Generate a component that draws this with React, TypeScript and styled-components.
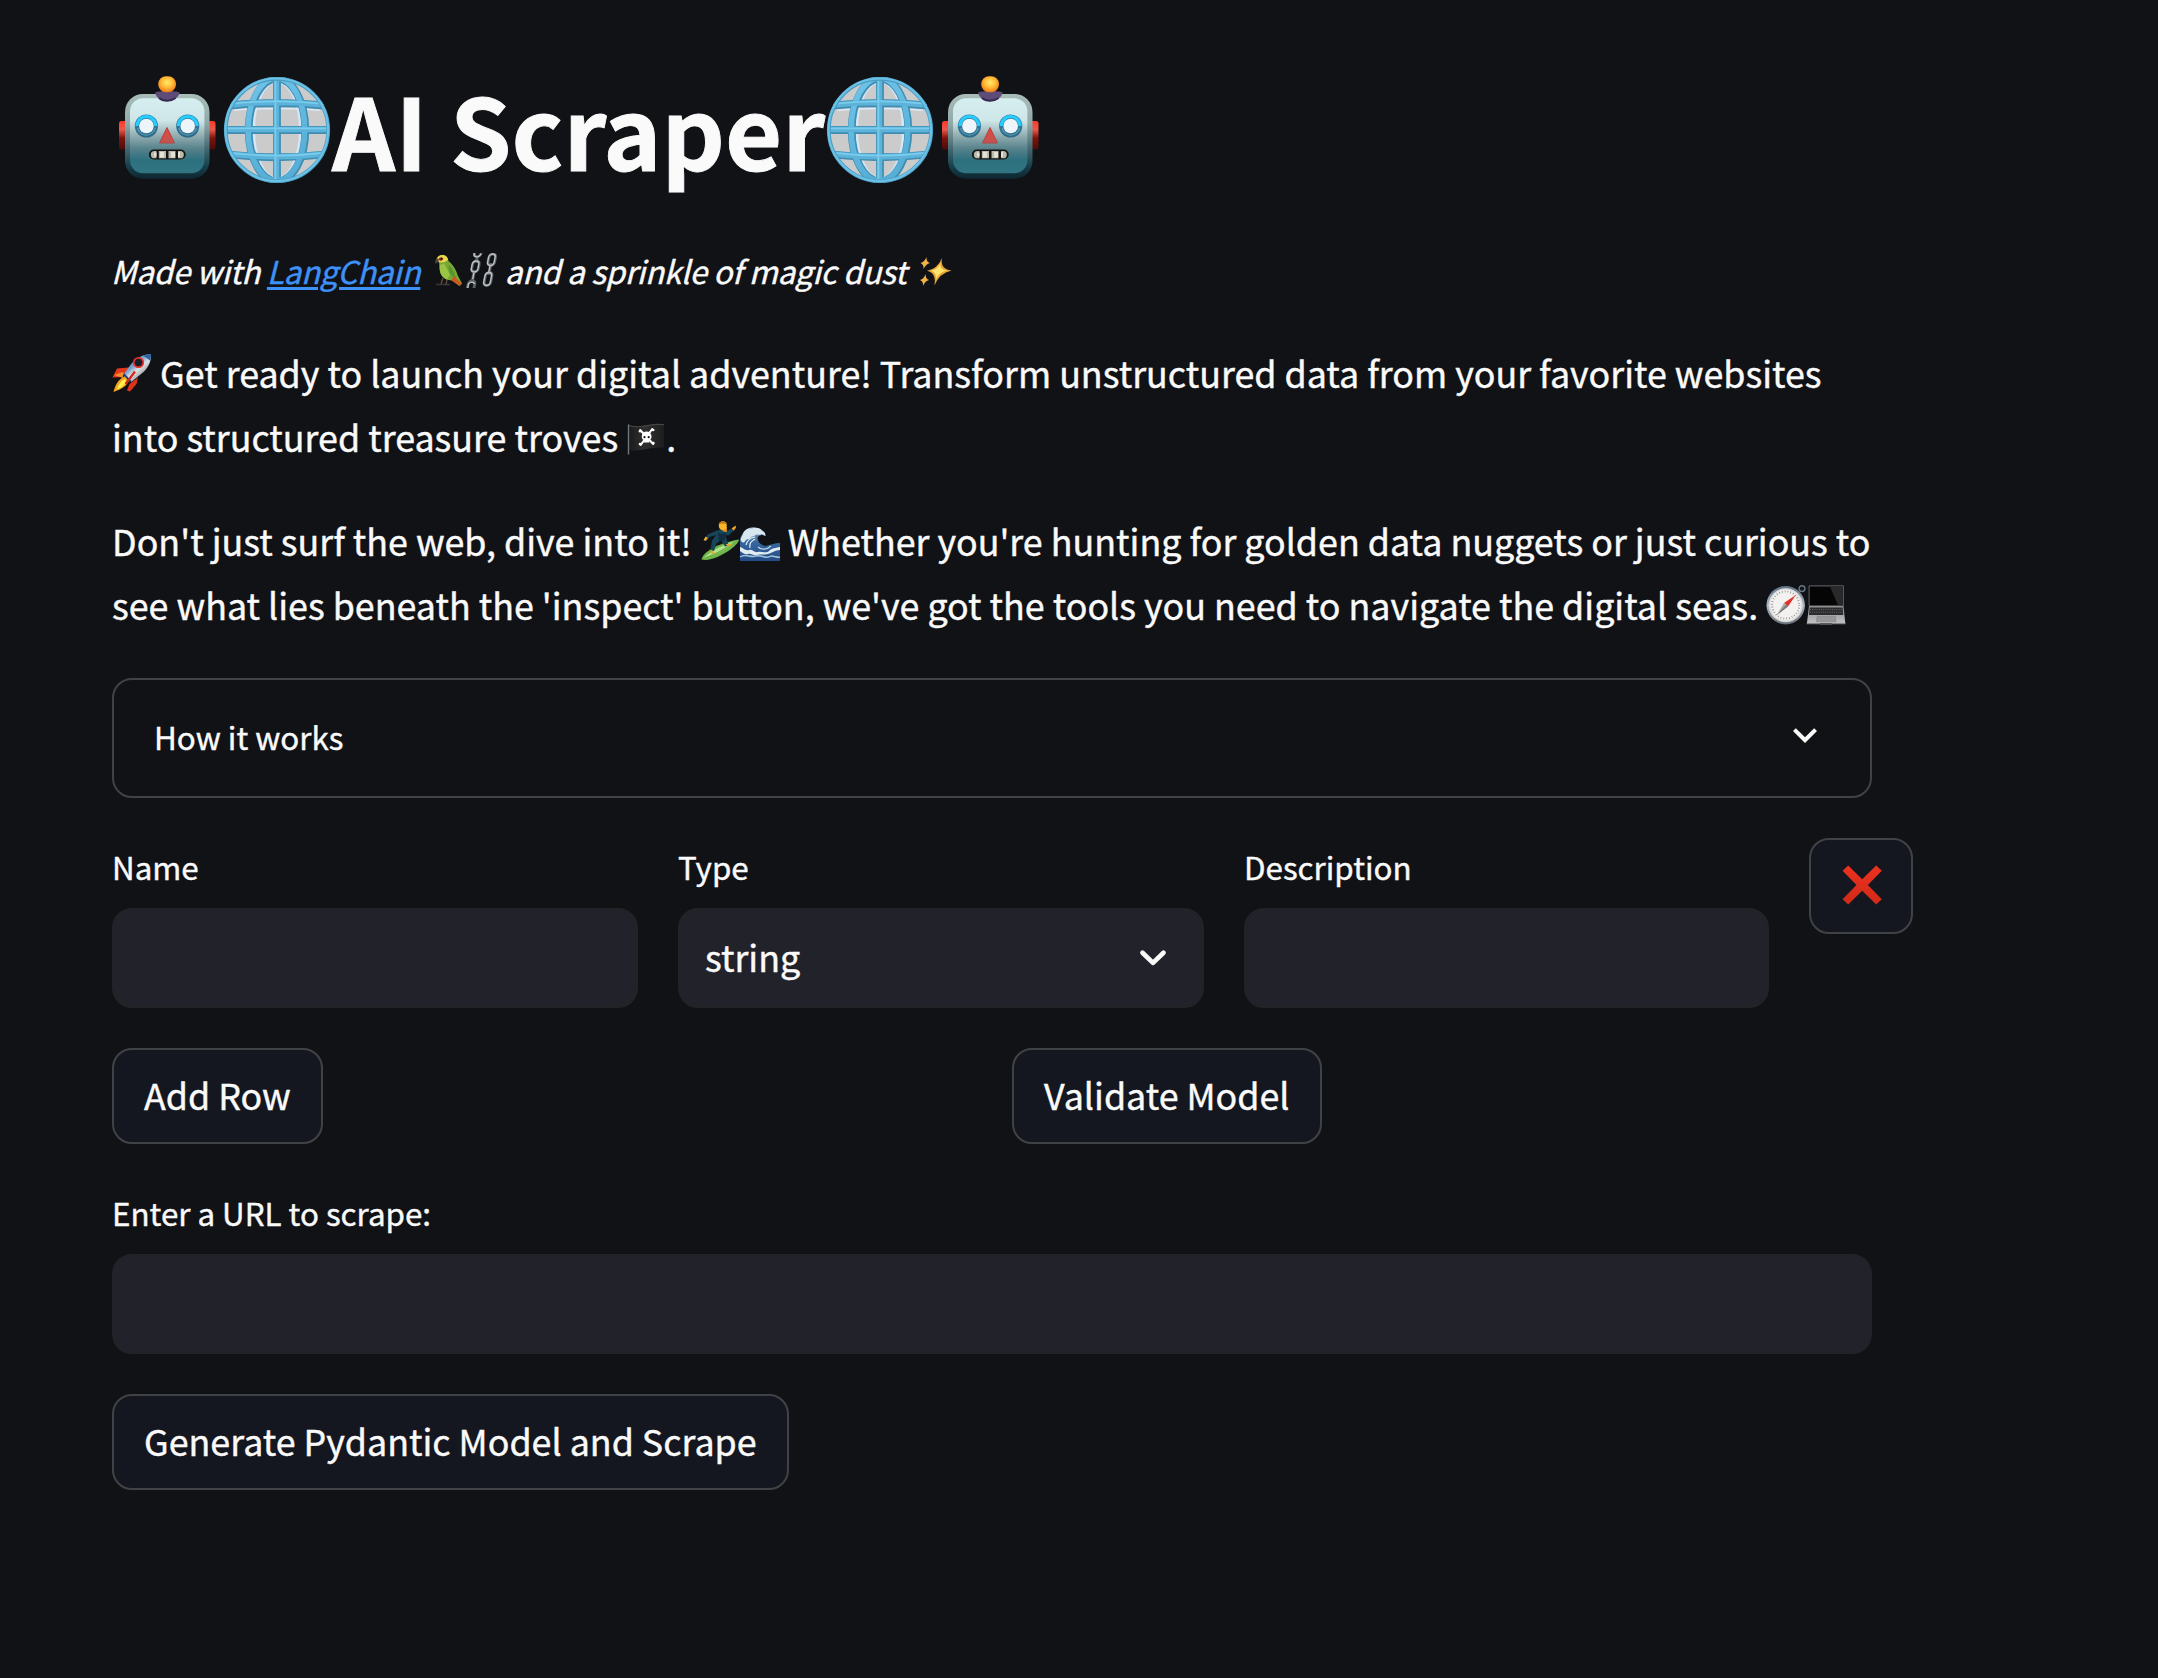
import React, { useId } from 'react';
import styled, { createGlobalStyle } from 'styled-components';

const color = {
  page: '#111216',
  text: '#fafafa',
  link: '#3d91f7',
  field: '#22222a',
  fieldEdge: '#222227',
  button: '#14171f',
  line: '#414245',
};

const GlobalStyle = createGlobalStyle`
  body {
    margin: 0;
    background: ${color.page};
    color: ${color.text};
    font-family: "Noto Sans CJK SC", "Noto Sans", sans-serif;
    font-size: 35.82px;
    -webkit-text-stroke: 0.4px currentColor;
  }
  *, *::before, *::after { box-sizing: border-box; }
`;

const Page = styled.main`
  display: flex;
  flex-direction: column;
  width: 2158px;
  height: 1678px;
  padding: 62px 0 0 112px;
  overflow: hidden;
`;

const Content = styled.div`
  display: flex;
  flex-direction: column;
  width: 1760px;
`;

const Title = styled.h1`
  margin: 0 0 49px;
  height: 132px;
  font-size: 98.5px;
  font-weight: 700;
  line-height: 132px;
  white-space: nowrap;
  -webkit-text-stroke-width: 0.9px;
`;

const Caption = styled.p`
  margin: 0 0 41px -1px;
  height: 56px;
  font-size: 31.34px;
  font-style: italic;
  line-height: 56px;
  letter-spacing: -0.26px;
  white-space: nowrap;
`;

const Link = styled.a`
  color: ${color.link};
  text-decoration: underline;
  text-decoration-thickness: 3px;
  text-underline-offset: 3px;
`;

const Paragraph = styled.p<{ $after: number }>`
  margin: 0 0 ${(p) => p.$after}px;
  line-height: 64px;
  white-space: nowrap;
`;

const Emoji = styled.svg<{ $size: number; $drop: number; $before?: number; $after?: number }>`
  display: inline-block;
  width: ${(p) => p.$size}px;
  height: ${(p) => p.$size}px;
  margin: 0 ${(p) => p.$after ?? 0}px 0 ${(p) => p.$before ?? 0}px;
  vertical-align: -${(p) => p.$drop}px;
  overflow: visible;
`;

const Stack = styled.div`
  display: flex;
  flex-direction: column;
  gap: 40px;
`;

const Expander = styled.div`
  display: flex;
  align-items: center;
  justify-content: space-between;
  height: 120px;
  padding: 0 41px 4px 40px;
  border: 2px solid ${color.line};
  border-radius: 20px;
  font-size: 31.34px;
`;

const FieldRow = styled.div`
  display: grid;
  grid-template-columns: 526px 526px 525px minmax(0, 1fr);
  gap: 40px;
  align-items: start;
`;

const ActionRow = styled.div`
  display: grid;
  grid-template-columns: 1fr 1fr;
  gap: 40px;
`;

const Field = styled.div`
  display: flex;
  flex-direction: column;
`;

const Label = styled.label`
  height: 60px;
  margin-bottom: 10px;
  font-size: 31.34px;
  line-height: 58px;
`;

const Input = styled.div`
  display: flex;
  align-items: center;
  justify-content: space-between;
  height: 100px;
  padding: 0 34px 0 25px;
  border: 2px solid ${color.fieldEdge};
  border-radius: 20px;
  background: ${color.field};
`;

const Value = styled.span`
  padding-bottom: 5px;
  line-height: 64px;
`;

const Button = styled.button`
  display: inline-flex;
  align-items: center;
  justify-content: center;
  justify-self: start;
  align-self: flex-start;
  height: 96px;
  padding: 0 30px 5px;
  border: 2px solid ${color.line};
  border-radius: 20px;
  background: ${color.button};
  color: inherit;
  font: inherit;
  white-space: nowrap;
`;

const IconButton = styled(Button)`
  padding: 0 29px 2px 31px;
`;

const Glyph = styled.svg<{ $size: number }>`
  display: block;
  flex: none;
  width: ${(p) => p.$size}px;
  height: ${(p) => p.$size}px;
`;

function Robot() {
  const id = useId();
  return (
    <Emoji $size={110} $drop={14} viewBox="0 0 110 110" role="img">
      <defs>
        <linearGradient id={`${id}s`} x2="0" y2="1">
          <stop offset="0" stopColor="#a9bdb8" />
          <stop offset=".35" stopColor="#8fa9a9" />
          <stop offset=".62" stopColor="#4a6d75" />
          <stop offset=".85" stopColor="#17414d" />
          <stop offset="1" stopColor="#0e2630" />
        </linearGradient>
        <linearGradient id={`${id}f`} x2="0" y2="1">
          <stop offset="0" stopColor="#d5eef0" />
          <stop offset=".3" stopColor="#cfe6e8" />
          <stop offset=".5" stopColor="#92adb1" />
          <stop offset=".68" stopColor="#55808a" />
          <stop offset=".82" stopColor="#2d717f" />
          <stop offset="1" stopColor="#317583" />
        </linearGradient>
        <linearGradient id={`${id}e`} x2="0" y2="1">
          <stop offset="0" stopColor="#ff3a25" />
          <stop offset=".3" stopColor="#e8584c" />
          <stop offset=".6" stopColor="#7c130c" />
          <stop offset="1" stopColor="#4a0d0a" />
        </linearGradient>
        <radialGradient id={`${id}b`} cx=".5" cy=".4" r=".6">
          <stop offset="0" stopColor="#ffec6b" />
          <stop offset=".5" stopColor="#ffbd38" />
          <stop offset="1" stopColor="#ef7a17" />
        </radialGradient>
        <linearGradient id={`${id}r`} x2="0" y2="1">
          <stop offset="0" stopColor="#2a7fae" />
          <stop offset=".45" stopColor="#34789c" />
          <stop offset="1" stopColor="#2b6886" />
        </linearGradient>
        <linearGradient id={`${id}n`} x2="0" y2="1">
          <stop offset="0" stopColor="#e8463e" />
          <stop offset="1" stopColor="#bf5552" />
        </linearGradient>
      </defs>
      <rect x="7" y="46" width="9" height="28.5" rx="2.5" fill={`url(#${id}e)`} />
      <rect x="94.5" y="46" width="9" height="28.5" rx="2.5" fill={`url(#${id}e)`} />
      <rect x="13" y="19" width="84.5" height="84.7" rx="18" fill={`url(#${id}s)`} />
      <rect x="18" y="23.3" width="74.4" height="75" rx="13" fill={`url(#${id}f)`} />
      <path d="M43 17.5c4-2 21-2 24.7 0-1.500 5.500-6.500 8.700-12.400 8.700s-11-3.200-12.300-8.700z" fill="#5d4b78" />
      <path d="M47 23c4 3.500 12 3.500 16.500 0" stroke="#382b52" strokeWidth="2" fill="none" />
      <rect x="46.200" y="1.200" width="17.800" height="16" rx="7.800" fill={`url(#${id}b)`} />
      {[34.4, 75.7].map((x) => (
        <g key={x}>
          <circle cx={x} cy="51" r="11.600" fill={`url(#${id}r)`} />
          <path d={`M${x - 9.4} 51a9.400 9.400 0 0 1 18.800 0`} fill="none" stroke="#27cdfc" strokeWidth="3" />
          <path d={`M${x - 8.8} 53a9 9 0 0 0 17.600 0`} fill="none" stroke="#5c9ab3" strokeWidth="1.200" />
          <circle cx={x} cy="51" r="7.300" fill="#edf5fb" />
        </g>
      ))}
      <path d="M55 52.500L62.500 68h-15z" fill={`url(#${id}n)`} stroke="#b04643" strokeWidth="1" strokeLinejoin="round" />
      <rect x="36.900" y="74.500" width="36.800" height="10" rx="5" fill="#151513" />
      <path d="M44.500 76v7.300h-2a3.650 3.650 0 0 1 0-7.300zM46.800 76h7.200v7.300h-7.200zM56.500 76h7v7.300h-7zM66 76h2.200a3.650 3.650 0 0 1 0 7.300H66z" fill="#b9b9ad" />
      <path d="M42 77.500h2.500v4H42zM48 77h4v5.500h-4zM59 77h4v5.500h-4zM66 77h2v5h-2z" fill="#e3e2d5" />
    </Emoji>
  );
}

function Globe() {
  const id = useId();
  return (
    <Emoji $size={110} $drop={14} viewBox="0 0 110 110" role="img">
      <defs>
        <linearGradient id={`${id}g`} x2=".3" y2="1">
          <stop offset="0" stopColor="#6fc5e8" />
          <stop offset="1" stopColor="#57aed6" />
        </linearGradient>
        <clipPath id={`${id}c`}>
          <circle cx="55" cy="55" r="53" />
        </clipPath>
      </defs>
      <circle cx="55" cy="55" r="52" fill="#cbcbcc" />
      <g clipPath={`url(#${id}c)`} fill="none">
        <ellipse cx="55" cy="55" rx="23.300" ry="48.500" stroke="#d5e7f5" strokeWidth="2.800" />
        <path d="M12 35.200Q55 31.700 98 35.200" stroke="#dceaf4" strokeWidth="1.500" />
        <g stroke="#3f8db2" strokeWidth="7.800">
          <ellipse cx="55" cy="55" rx="28.300" ry="51.500" />
          <path d="M8 30.500Q55 25.500 102 30.500M8 79.500Q55 85 102 79.500M2.500 55h105M55 2.500v105" />
        </g>
        <ellipse cx="54.400" cy="54.400" rx="28.300" ry="51.500" stroke={`url(#${id}g)`} strokeWidth="5.600" />
        <path d="M8 30Q55 25 102 30M8 79Q55 84.500 102 79M2.500 54.500h105M54.500 2.500v105" stroke="#5cb2d8" strokeWidth="5.400" />
        <path d="M8 28.800Q55 23.800 102 28.800M8 77.800Q55 83.300 102 77.800M2.500 53.300h105M53.400 2.500v105" stroke="#7bcdee" strokeWidth="1.700" />
      </g>
      <circle cx="55" cy="55" r="51.200" fill="none" stroke="#4b9cc2" strokeWidth="3.800" />
      <circle cx="54.800" cy="54.800" r="51.300" fill="none" stroke="#6cc2e6" strokeWidth="2.200" />
    </Emoji>
  );
}

function Parrot() {
  return (
    <Emoji $size={35} $drop={4} $before={3} viewBox="0 0 35 35" role="img">
      <path d="M6 31.500h14" stroke="#3a3433" strokeWidth="1.600" />
      <path d="M13 25l-2 6M17 26l-1 6" stroke="#5a4b42" strokeWidth="1.500" />
      <path d="M6.500 8C6 4 9 2 12 2c4 0 6 2.500 6.500 6 4 3 8 9 9 14l4.500 8.500-2.500 2.500-7-5.500c-6 0-11-3-12.500-9C9 14 9.500 11 9 9z" fill="#77a833" />
      <path d="M10 12c-1 7 1 12 7 14.500l3-5-6-11z" fill="#9ac544" />
      <path d="M18 15c4 3 7 7 9 11l5 4.500-2.500 2.500-8-5.500 2-5z" fill="#c85b22" />
      <path d="M19 12c3 3 6 8 6 12l-3-1c-3-3-4-7-3-11z" fill="#53962f" />
      <path d="M7 6.500C8 3 10 2 13 2c3 .3 4.500 2 5 5-3 2.500-7 3-10 2z" fill="#e9d84e" />
      <path d="M9 5c2-1 3.500-.5 4.500 1L11 8 8.500 7z" fill="#a22a1a" />
      <circle cx="11.500" cy="5.700" r="1.100" fill="#1e1512" />
      <path d="M8.500 6C5.500 5 4.500 8 5.800 11c.7-1.500 2-2 3-2.500z" fill="#484842" />
    </Emoji>
  );
}

function Chains() {
  return (
    <Emoji $size={35} $drop={4} $after={-2} viewBox="0 0 35 35" role="img">
      <svg width="40" height="35">
        <g fill="none" transform="translate(6.500 0) skewX(-11)">
          <g stroke="#5e6164" strokeWidth="2.800">
            <path d="M3-2.500v3a3.300 3.300 0 0 0 6.600 0v-3" />
            <rect x="3.300" y="8" width="6.600" height="11" rx="3.300" />
            <path d="M2.700 36V31a3.300 3.300 0 0 1 6.600 0v5" />
            <path d="M6.500 4.500v5M6.300 17v11" strokeWidth="3" />
            <g transform="translate(15 1)">
              <rect x="3.300" y="0" width="6.600" height="11.500" rx="3.300" />
              <rect x="3.300" y="18.500" width="6.600" height="13" rx="3.300" />
              <path d="M6.500 9v12" strokeWidth="3" />
            </g>
          </g>
          <g stroke="#bcc4ca" strokeWidth="1.300">
            <rect x="2.900" y="8" width="6.600" height="11" rx="3.300" />
            <path d="M2.800-2v2.500a3.300 3.300 0 0 0 6.600 0M6.300 20v6M3 35v-4a3.300 3.300 0 0 1 6 0" />
            <g transform="translate(15 1)">
              <rect x="2.900" y="0" width="6.600" height="11.500" rx="3.300" />
              <rect x="2.900" y="18.500" width="6.600" height="13" rx="3.300" />
              <path d="M6 12v6" />
            </g>
          </g>
        </g>
      </svg>
    </Emoji>
  );
}

function Sparkles() {
  return (
    <Emoji $size={35} $drop={4} $before={3} viewBox="0 0 35 35" role="img">
      <path d="M26 5Q24 16 35.500 17.500 23.500 20 18.500 32.500 20.500 20 11 17.800 21.500 16 26 5z" fill="#e6a33a" />
      <path d="M24.500 10Q23 16.500 31 17.600 22.500 19.500 20 27 21 19.500 15 17.700 21.500 16.500 24.500 10z" fill="#ffe36a" />
      <path d="M10.500 4Q10 9 14 10q-4 .8-6.500 6Q8 11.500 4.500 10q4-.8 6-6zM9.500 21q0 5 3.500 6-4 .9-6 6 .5-4.500-3-6 4-.9 5.500-6z" fill="#f0b244" />
    </Emoji>
  );
}

function Rocket() {
  const id = useId();
  return (
    <Emoji $size={40} $drop={5} viewBox="0 0 40 40" role="img">
      <defs>
        <linearGradient id={id} x1=".2" y1=".1" x2=".8" y2=".8">
          <stop offset="0" stopColor="#3f6fa5" />
          <stop offset=".4" stopColor="#7ea5cb" />
          <stop offset=".6" stopColor="#dfe2e4" />
          <stop offset="1" stopColor="#85898e" />
        </linearGradient>
      </defs>
      <path d="M5 15.500l12-1-5 9.500-11.500.500z" fill="#e5381a" />
      <path d="M2 22l9-3 2 3-2 3z" fill="#f98b2a" />
      <path d="M17.500 31l8.500-6.500-1.500 6.500-6.500 7.500-3-1z" fill="#e1321a" />
      <path d="M39 1.300c.5 8-3.500 14.500-9 19l-10.500 8.500-8.500-6.500 7.500-10.500C23.500 5.500 30.500 1 39 1.300z" fill={`url(#${id})`} />
      <path d="M31 2.500c3-1 5.500-1.300 8-1.200.1 2.200-.1 4.500-.7 6.500z" fill="#2f62a0" />
      <path d="M12 20l7.500 8-2.500 1.500-6.500-6z" fill="#203f77" />
      <path d="M13 23.500l3.500 4.500c-2 5-6.500 8-15 11 1.500-6.500 4.500-13 11.500-15.500z" fill="#f5a51d" />
      <path d="M12.500 26l2 2.500c-2 4-5 6-9.500 8 1.500-5 3.500-8.500 7.500-10.500z" fill="#fff04f" />
      <path d="M23 18.500L13.500 31" stroke="#d52519" strokeWidth="2.200" />
      <circle cx="26.500" cy="9.500" r="4.700" fill="#17202a" stroke="#e3302a" strokeWidth="1.800" />
    </Emoji>
  );
}

function PirateFlag() {
  const id = useId();
  return (
    <Emoji $size={40} $drop={5} viewBox="0 0 40 40" role="img">
      <defs>
        <linearGradient id={id}>
          <stop offset="0" stopColor="#1b1b1c" />
          <stop offset=".45" stopColor="#303031" />
          <stop offset="1" stopColor="#1d1d1e" />
        </linearGradient>
      </defs>
      <path d="M3 8.500c11 4 22-3 35-.8V31c-12-2-22 4-35 2z" fill={`url(#${id})`} />
      <path d="M3 8.500c11 4 22-3 35-.8" fill="none" stroke="#4c4c4e" strokeWidth="1" />
      <path d="M2.500 7.500v30" stroke="#6f767d" strokeWidth="1.400" />
      <g transform="translate(-.8 -.5)">
        <path d="M15 13.500l13 14M27 12.500L15.500 28.500" stroke="#fff" strokeWidth="2" strokeLinecap="round" />
        <g fill="#fff">
          <circle cx="14.800" cy="14.800" r="1.300" />
          <circle cx="28" cy="13.500" r="1.300" />
          <circle cx="14.800" cy="27.500" r="1.300" />
          <circle cx="28.200" cy="26.500" r="1.300" />
          <path d="M16.500 20a4.900 5 0 0 1 9.800 0c0 2-.8 3-2.100 3.700V26h-5.400v-2.300c-1.500-.7-2.300-1.700-2.300-3.700z" />
        </g>
        <circle cx="19.300" cy="20.700" r="1.100" fill="#171717" />
        <circle cx="23.500" cy="20.700" r="1.100" fill="#171717" />
      </g>
    </Emoji>
  );
}

function Surfer() {
  return (
    <Emoji $size={40} $drop={5} viewBox="0 0 40 40" role="img">
      <path d="M1.500 38.500C3 31 17 22.500 38.500 18.500c1.500 1-2 5.500-8 10C22 34.500 10 40.500 1.500 38.500z" fill="#6db54b" />
      <path d="M4 36.500c6-6 19-13 32-16.500-5 6-18 14-32 16.500z" fill="#b2e28a" />
      <path d="M6 36.500Q22 31 35.500 20.500" stroke="#69ae48" strokeWidth="1.200" fill="none" />
      <path d="M17 9.500c4-1.500 8-1 10.500 0l5.500-2.500 1.500 2-6 5.500-3-.5 1.500 5.500 1.500 5-3.500 1-4-6.500-4.500 3.500-2.500 7.500-3.500-1.500 1.500-9 4-5.500-6.500 2-3 4-2-1.500 3-5z" fill="#174458" />
      <path d="M18 10.500c2 3 5 3 8 .5l-1 8-6 1.500z" fill="#102e40" />
      <path d="M23 6h4v4.500c-1.500 1-3 .7-4-.5z" fill="#d78a1c" />
      <ellipse cx="22.800" cy="4.800" rx="4" ry="4.600" fill="#f8b528" />
      <path d="M18.500 4c.5-5 8-5 8.500-.5-3-1.500-6-1.500-8.500.5z" fill="#c07915" />
      <path d="M31.500 7.500l4-3 .5 2-2 3zM5.500 15.500L8 17l-2.500 3-2-1zM25.500 23l3 0 4 0-4.500 2.500zM11 29l3 2 .5 3.500-4-3.500z" fill="#eea426" />
    </Emoji>
  );
}

function Wave() {
  const id = useId();
  return (
    <Emoji $size={40} $drop={5} viewBox="0 0 40 40" role="img">
      <defs>
        <linearGradient id={id} x2="0" y2="1">
          <stop offset="0" stopColor="#8fb0cb" />
          <stop offset=".45" stopColor="#37669f" />
          <stop offset="1" stopColor="#244b85" />
        </linearGradient>
      </defs>
      <path d="M0 40V19c0-3 2-5 3-7 3-5 9-7 14-5 4 0 7 3 8.500 8-3-2-6-1-8 1 0 5 3 8 8 9 5-1 9-3 14.500-3v18z" fill={`url(#${id})`} />
      <path d="M1 20c-1-3 1-4 2-7 1-4 5-6 9-5.500 4-2 9 0 10 2.500 3 .5 3.500 3 3.500 5-2-.5-2.500-1.800-4-2-2 1.500-3 .5-4 .5-2.500 0-3 2-5 2-2 0-1.500 2.500-4 2.500s-3 2-4 3-2 .5-3.500-1z" fill="#d8e7ed" />
      <path d="M6 24c1-4 4-7 9-8M10 27c-1-4 1-7 5-9" stroke="#dfeef5" strokeWidth="1.200" fill="none" />
      <path d="M0 26c4 1 5 4 9 3s5 3 9 2 8 2 11-1 6-3 11-4v3c-5 0-8 3-12 4s-7 0-11 1-6-2-9-1-5-1-8-3z" fill="#e1edf2" />
      <path d="M0 36c6-4 10 1 16-1s9 4 15 0c4 0 6 2 9 1" stroke="#a2c4da" strokeWidth="1.500" fill="none" />
      <path d="M18 26c3 3 9 3 13-1" stroke="#bbd5e4" strokeWidth="1.300" fill="none" />
    </Emoji>
  );
}

function Compass() {
  const id = useId();
  return (
    <Emoji $size={40} $drop={5} viewBox="0 0 40 40" role="img">
      <defs>
        <linearGradient id={id} x2="0" y2="1">
          <stop offset="0" stopColor="#5b6f85" />
          <stop offset=".5" stopColor="#aeb7bf" />
          <stop offset="1" stopColor="#666e77" />
        </linearGradient>
      </defs>
      <circle cx="36" cy="3.600" r="2.900" fill="none" stroke="#687786" strokeWidth="1.400" />
      <circle cx="19.700" cy="20.200" r="19.200" fill={`url(#${id})`} />
      <circle cx="19.700" cy="20.200" r="17" fill="#dadada" />
      <circle cx="19.700" cy="20" r="15.400" fill="#f3f2f0" />
      <circle cx="19.700" cy="20" r="13.600" fill="none" stroke="#8f8f8f" strokeWidth="2" strokeDasharray=".8 2.050" />
      <path d="M18 18L29.800 10 22 21.500z" fill="#e2302b" />
      <path d="M18 18l4 3.500L10.500 30.500z" fill="#a9a9a8" />
      <path d="M20 19.800l2 1.700-11.500 9z" fill="#77797a" />
    </Emoji>
  );
}

function Laptop() {
  const id = useId();
  return (
    <Emoji $size={40} $drop={5} viewBox="0 0 40 40" role="img">
      <defs>
        <linearGradient id={id} x2="0" y2="1">
          <stop offset="0" stopColor="#8d8d8f" />
          <stop offset="1" stopColor="#c0c0c2" />
        </linearGradient>
      </defs>
      <rect x="2.500" y=".3" width="35.500" height="21" rx="1.300" fill="#56575a" />
      <path d="M3.700 1.500h33v18.700h-33z" fill="#050505" />
      <path d="M24 1.500h12.700v18.700H32z" fill="#29292b" />
      <path d="M3 21h34.500l1.800 17.500H.9z" fill={`url(#${id})`} />
      <path d="M3.700 22.500h33l.6 7.500H3z" fill="#2c2c2e" />
      <path d="M4 24.600h33M3.700 27.200h33.300" stroke="#77777a" strokeWidth=".8" strokeDasharray="1 1.200" />
      <path d="M11 31.300h18.500l.4 5.500H10.500z" fill="#96969a" stroke="#858589" strokeWidth=".6" />
      <path d="M.7 38h38.700v1.200H.7z" fill="#828285" />
      <path d="M14 38h12v1.800H14z" fill="#5a5a5c" />
    </Emoji>
  );
}

function ExpandMore() {
  return (
    <Glyph $size={48} viewBox="0 0 24 24" role="img">
      <path d="M16.590 8.090L12 12.670 7.410 8.090 6 9.500l6 6 6-6z" fill={color.text} />
    </Glyph>
  );
}

function SelectArrow() {
  return (
    <Glyph $size={30} viewBox="0 0 30 30" role="img">
      <path d="M4.500 9.700L15 19.900 25.500 9.700" fill="none" stroke={color.text} strokeWidth="4.700" strokeLinecap="round" strokeLinejoin="round" />
    </Glyph>
  );
}

function Cross() {
  const id = useId();
  return (
    <Glyph $size={40} viewBox="0 0 40 40" role="img">
      <defs>
        <linearGradient id={id} x2="0" y2="1">
          <stop offset="0" stopColor="#ee3120" />
          <stop offset="1" stopColor="#d02a17" />
        </linearGradient>
      </defs>
      <path d="M6.200.500L20.200 14.300 34.200.500 39.800 5.800 25.900 20 39.800 34.200 34.200 39.500 20.200 25.700 6.200 39.500.600 34.200 14.500 20 .600 5.800z" fill={`url(#${id})`} />
    </Glyph>
  );
}

export default function App() {
  return (
    <Page>
      <GlobalStyle />
      <Content>
        <Title>
          <Robot />
          <Globe />
          AI Scraper
          <Globe />
          <Robot />
        </Title>
        <Caption>
          Made with <Link>LangChain</Link> <Parrot />
          <Chains /> and a sprinkle of magic dust <Sparkles />
        </Caption>
        <Paragraph $after={40}>
          <Rocket /> Get ready to launch your digital adventure! Transform unstructured data from your favorite websites
          <br />
          into structured treasure troves <PirateFlag />.
        </Paragraph>
        <Paragraph $after={42}>
          Don't just surf the web, dive into it! <Surfer />
          <Wave /> Whether you're hunting for golden data nuggets or just curious to
          <br />
          see what lies beneath the 'inspect' button, we've got the tools you need to navigate the digital seas.{' '}
          <Compass />
          <Laptop />
        </Paragraph>
        <Stack>
          <Expander>
            <span>How it works</span>
            <ExpandMore />
          </Expander>
          <FieldRow>
            <Field>
              <Label>Name</Label>
              <Input />
            </Field>
            <Field>
              <Label>Type</Label>
              <Input>
                <Value>string</Value>
                <SelectArrow />
              </Input>
            </Field>
            <Field>
              <Label>Description</Label>
              <Input />
            </Field>
            <IconButton>
              <Cross />
            </IconButton>
          </FieldRow>
          <ActionRow>
            <Button>Add Row</Button>
            <Button>Validate Model</Button>
          </ActionRow>
          <Field>
            <Label>Enter a URL to scrape:</Label>
            <Input />
          </Field>
          <Button>Generate Pydantic Model and Scrape</Button>
        </Stack>
      </Content>
    </Page>
  );
}
